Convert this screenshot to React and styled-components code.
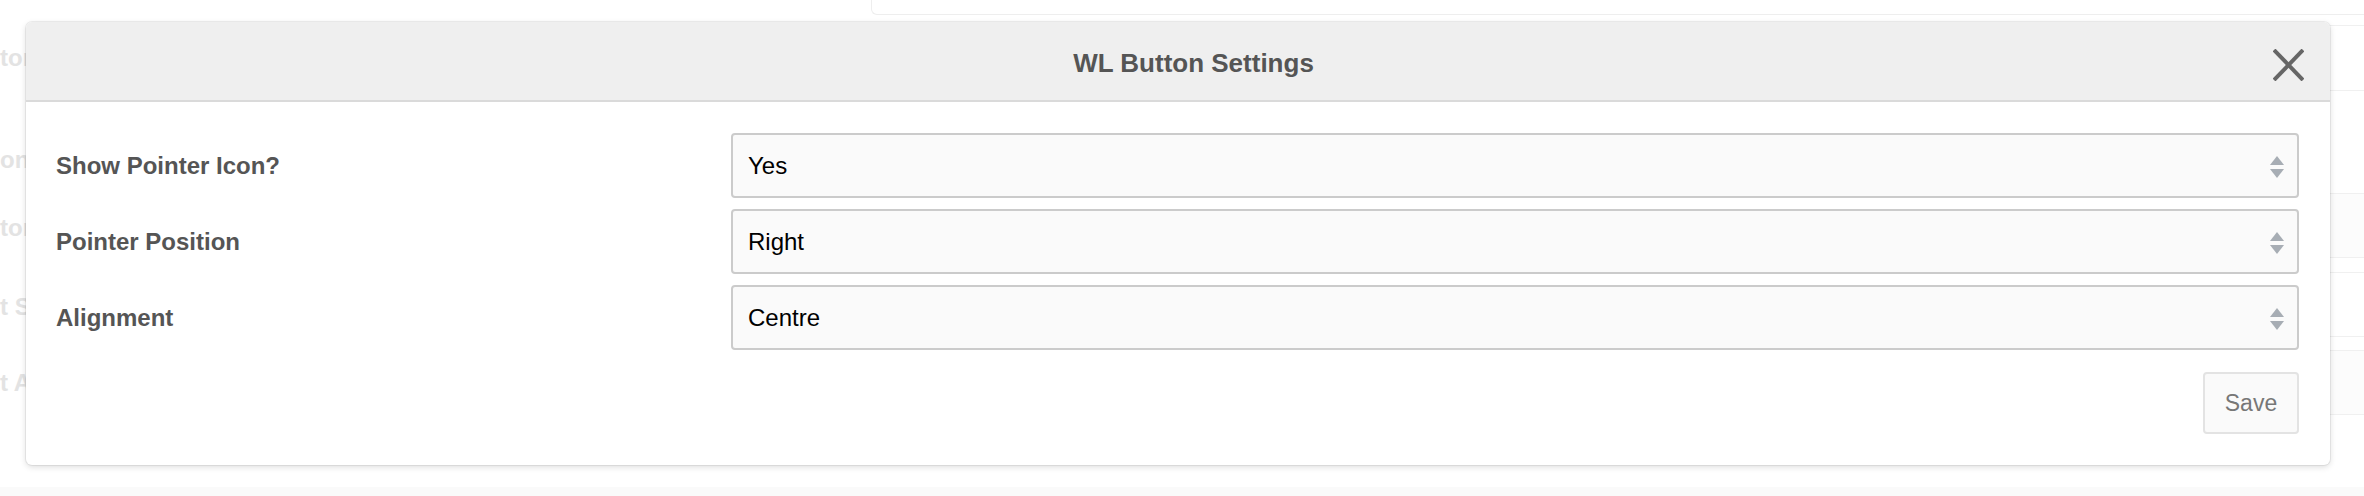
import React from "react";
import styled, { createGlobalStyle } from "styled-components";

const Global = createGlobalStyle`
  html, body { margin: 0; padding: 0; background: #ffffff; }
  body { font-family: "Liberation Sans", Arial, Helvetica, sans-serif; }
  * { box-sizing: border-box; }
`;

const Page = styled.div`
  position: relative;
  width: 2364px;
  height: 496px;
  overflow: hidden;
  display: flex;
  flex-direction: column;
  background: #ffffff;
`;

const Backdrop = styled.div`
  display: flex;
  height: 487px;
`;

const LeftCol = styled.div`
  width: 871px;
  display: flex;
  flex-direction: column;
`;

const BgLabel = styled.div`
  margin-top: ${(p) => p.$gap}px;
  height: 28px;
  line-height: 28px;
  font-size: 24px;
  font-weight: 700;
  color: #e3e3e3;
  white-space: nowrap;
`;

const RightArea = styled.div`
  flex: 1;
  display: flex;
  flex-direction: column;
`;

const TopCard = styled.div`
  height: 15px;
  border-left: 1px solid #eeeeee;
  border-bottom: 1px solid #eeeeee;
  border-bottom-left-radius: 6px;
`;

const BgRow = styled.div`
  height: ${(p) => p.$h}px;
  margin-top: ${(p) => p.$mt || 0}px;
  border-top: 1px solid #f0f0f0;
  background: ${(p) => (p.$shade ? "#fcfcfc" : "transparent")};
`;

const BottomBand = styled.div`
  height: 9px;
  background: #fafafa;
`;

const Modal = styled.div`
  position: absolute;
  left: 26px;
  top: 22px;
  width: 2304px;
  background: #ffffff;
  border-radius: 6px;
  box-shadow: 0 0 0 1px rgba(0, 0, 0, 0.06), 0 2px 6px rgba(0, 0, 0, 0.14);
  overflow: hidden;
`;

const Header = styled.div`
  height: 80px;
  display: flex;
  align-items: center;
  padding: 0 26px 0 56px;
  background: #efefef;
  border-bottom: 2px solid #dadada;
`;

const Title = styled.h4`
  flex: 1;
  margin: 0;
  padding: 4px 0 0 32px;
  text-align: center;
  font-size: 26px;
  font-weight: 700;
  color: #555555;
`;

const CloseButton = styled.button`
  margin-top: 8px;
  width: 31px;
  height: 32px;
  padding: 0;
  border: none;
  background: transparent;
  display: flex;
  cursor: pointer;
`;

const Body = styled.div`
  padding: 31px 31px 31px 30px;
  display: grid;
  grid-template-columns: 675px 1fr;
  row-gap: 11px;
`;

const Label = styled.label`
  align-self: center;
  font-size: 24px;
  font-weight: 700;
  color: #555555;
`;

const SelectWrap = styled.div`
  position: relative;
  height: 65px;
`;

const Select = styled.select`
  width: 100%;
  height: 100%;
  appearance: none;
  -webkit-appearance: none;
  border: 2px solid #cbcbcb;
  border-radius: 4px;
  background: #fafafa;
  padding: 0 40px 0 15px;
  font-family: "Liberation Sans", Arial, Helvetica, sans-serif;
  font-size: 24px;
  color: #000000;
  outline: none;
`;

const Arrows = styled.svg`
  position: absolute;
  right: 15px;
  top: 23px;
  pointer-events: none;
`;

const Footer = styled.div`
  grid-column: 1 / -1;
  display: flex;
  justify-content: flex-end;
  margin-top: 11px;
`;

const SaveButton = styled.button`
  width: 96px;
  height: 62px;
  border: 2px solid #e3e3e3;
  border-radius: 4px;
  background: #fafafa;
  color: #777777;
  font-family: "Liberation Sans", Arial, Helvetica, sans-serif;
  font-size: 23px;
  padding: 0;
  cursor: pointer;
`;

const fields = [
  { label: "Show Pointer Icon?", value: "Yes", options: ["Yes", "No"] },
  { label: "Pointer Position", value: "Right", options: ["Left", "Right"] },
  { label: "Alignment", value: "Centre", options: ["Left", "Centre", "Right"] },
];

const bgLabels = [
  { text: "tor", gap: 44 },
  { text: "on", gap: 74 },
  { text: "tor", gap: 40 },
  { text: "t S", gap: 51 },
  { text: "t A", gap: 48 },
];

const bgRows = [
  { h: 65, mt: 10 },
  { h: 103 },
  { h: 64, shade: true },
  { h: 15 },
  { h: 64 },
  { h: 14 },
  { h: 64, shade: true },
  { h: 72 },
];

function SortArrows() {
  return (
    <Arrows width="14" height="24" viewBox="0 0 14 24">
      <polygon points="7,0 14,9 0,9" fill="#a7adb4" />
      <polygon points="0,13 14,13 7,22" fill="#a7adb4" />
    </Arrows>
  );
}

export default function App() {
  return (
    <>
      <Global />
      <Page>
        <Backdrop>
          <LeftCol>
            {bgLabels.map((b, i) => (
              <BgLabel key={i} $gap={b.gap}>
                {b.text}
              </BgLabel>
            ))}
          </LeftCol>
          <RightArea>
            <TopCard />
            {bgRows.map((r, i) => (
              <BgRow key={i} $h={r.h} $mt={r.mt} $shade={r.shade} />
            ))}
          </RightArea>
        </Backdrop>
        <BottomBand />

        <Modal>
          <Header>
            <Title>WL Button Settings</Title>
            <CloseButton aria-label="Close">
              <svg width="31" height="32" viewBox="0 0 31 32">
                <line x1="1" y1="1" x2="30" y2="31" stroke="#666666" strokeWidth="4" />
                <line x1="30" y1="1" x2="1" y2="31" stroke="#666666" strokeWidth="4" />
              </svg>
            </CloseButton>
          </Header>
          <Body>
            {fields.map((f) => (
              <React.Fragment key={f.label}>
                <Label>{f.label}</Label>
                <SelectWrap>
                  <Select defaultValue={f.value}>
                    {f.options.map((o) => (
                      <option key={o} value={o}>
                        {o}
                      </option>
                    ))}
                  </Select>
                  <SortArrows />
                </SelectWrap>
              </React.Fragment>
            ))}
            <Footer>
              <SaveButton>Save</SaveButton>
            </Footer>
          </Body>
        </Modal>
      </Page>
    </>
  );
}
